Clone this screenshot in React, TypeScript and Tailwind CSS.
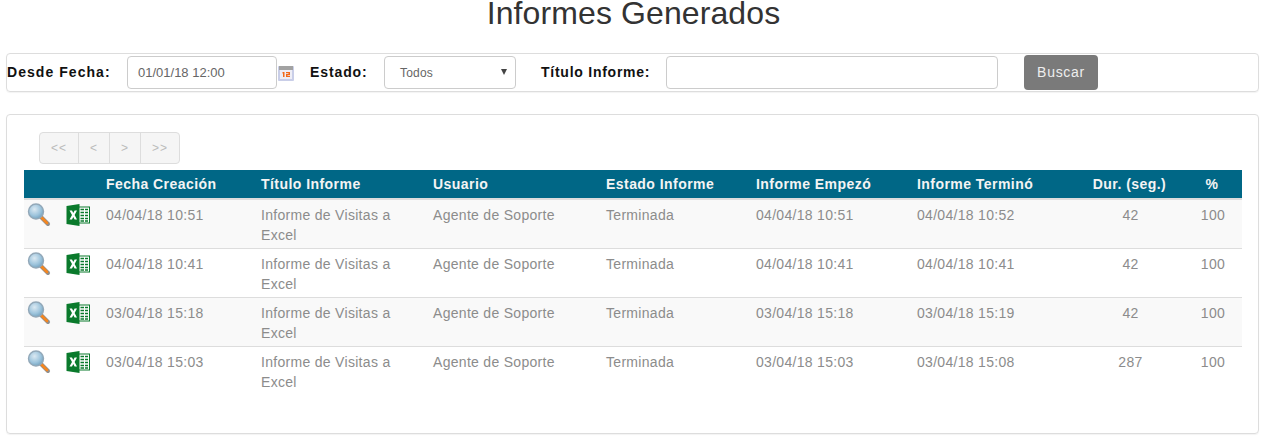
const rows = [
  ["04/04/18 10:51", "04/04/18 10:51", "04/04/18 10:52", "42"],
  ["04/04/18 10:41", "04/04/18 10:41", "04/04/18 10:41", "42"],
  ["03/04/18 15:18", "03/04/18 15:18", "03/04/18 15:19", "42"],
  ["03/04/18 15:03", "03/04/18 15:03", "03/04/18 15:08", "287"],
];

function Magnifier() {
  return (
    <svg width="24" height="24" viewBox="0 0 24 24" className="block">
      <defs>
        <radialGradient id="lens" cx="40%" cy="35%" r="70%">
          <stop offset="0%" stopColor="#dbe9f2" />
          <stop offset="60%" stopColor="#9dc4dc" />
          <stop offset="100%" stopColor="#6f9fbc" />
        </radialGradient>
      </defs>
      <path d="M13.5 13.5 L21 21" stroke="#8f8f8f" strokeWidth="4" strokeLinecap="round" />
      <path d="M14.5 14.5 L20 20" stroke="#f5861f" strokeWidth="2.6" strokeLinecap="round" />
      <circle cx="9" cy="8.5" r="7.5" fill="url(#lens)" stroke="#93a8b8" strokeWidth="1.4" />
    </svg>
  );
}

function ExcelIcon() {
  return (
    <svg width="24" height="22" viewBox="0 0 24 22" className="block">
      <rect x="12" y="2.5" width="12" height="17" fill="#0a7a2c" />
      <rect x="13" y="3.5" width="10" height="15" fill="#fff" />
      <path d="M14.5 5.5h3.5M19 5.5h3M14.5 8.5h3.5M19 8.5h3M14.5 11.5h3.5M19 11.5h3M14.5 14.5h3.5M19 14.5h3M14.5 17h3.5M19 17h3" stroke="#0a7a2c" strokeWidth="1.6" />
      <path d="M0.5 2 L13.5 0 V22 L0.5 20 Z" fill="#0a7a2c" />
      <path d="M3.5 6.5 L6 6.5 L7.3 9 L8.6 6.5 L11 6.5 L8.6 11 L11 15.5 L8.6 15.5 L7.3 13 L6 15.5 L3.5 15.5 L6 11 Z" fill="#fff" />
    </svg>
  );
}

function CalendarIcon() {
  return (
    <svg width="16" height="16" viewBox="0 0 16 16" className="block">
      <rect x="0" y="1" width="16" height="15" rx="1" fill="#c9cee8" />
      <rect x="1" y="1" width="14" height="4" fill="#a2a2a2" />
      <rect x="2" y="5" width="12" height="9" fill="#eeeef6" />
      <path d="M4.5 7h2v5h-1.5v-3.5h-.5zM8 7h4v3h-2.5v.8H12V12H8V9h2.5v-.8H8z" fill="#f26a1b" />
    </svg>
  );
}

const Td = ({ children, className = "" }: { children?: React.ReactNode; className?: string }) => (
  <td className={`px-1 pt-[5px] align-top ${className}`}>{children}</td>
);

export default function App() {
  return (
    <div className="h-[439px] w-[1264px] overflow-hidden bg-white font-['Liberation_Sans',Arial,sans-serif]">
      <h1 className="h-[53px] pl-[3px] text-center text-[32px] leading-[26px] font-normal tracking-[0.1px] text-[#333]">Informes Generados</h1>

      <div className="mx-[6px] flex h-[39px] w-[1253px] items-center rounded-[4px] border border-[#ddd] shadow-[0_1px_1px_rgba(0,0,0,0.05)]">
        <span className="w-[120px] text-[14px] font-bold tracking-[1.05px] text-[#111]">Desde Fecha:</span>
        <div className="flex h-[33px] w-[150px] items-center rounded-[4px] border border-[#ccc] pl-[10px] text-[13px] text-[#666]">01/01/18 12:00</div>
        <span className="ml-[1px] w-[16px]"><CalendarIcon /></span>
        <span className="ml-[16px] w-[74px] text-[14px] font-bold tracking-[0.9px] text-[#111]">Estado:</span>
        <div className="relative flex h-[33px] w-[132px] items-center rounded-[4px] border border-[#ccc] pl-[15px] text-[12px] tracking-[0.2px] text-[#666]">
          Todos
          <span className="absolute top-[12px] right-[8px] h-0 w-0 border-x-[3px] border-t-[6px] border-x-transparent border-t-[#444]" />
        </div>
        <span className="ml-[25px] w-[125px] text-[14px] font-bold tracking-[0.75px] text-[#111]">Título Informe:</span>
        <div className="h-[33px] w-[332px] rounded-[4px] border border-[#ccc]" />
        <button className="ml-[26px] h-[35px] w-[74px] rounded-[4px] bg-[#7a7a7a] text-[14px] tracking-[0.7px] text-[#eee]">Buscar</button>
      </div>

      <div className="mx-[6px] mt-[22px] h-[320px] w-[1253px] rounded-[4px] border border-[#ddd] px-[17px] pt-[17px] shadow-[0_1px_1px_rgba(0,0,0,0.05)]">
        <div className="ml-[15px] flex h-[32px] w-[141px] rounded-[4px] border border-[#ddd] bg-[#f5f5f5] text-[12px] text-[#bbb]">
          {[["<<", "w-[39px]"], ["<", "w-[31px]"], [">", "w-[31px]"], [">>", "flex-1"]].map(([t, w], i) => (
            <span key={i} className={`flex items-center justify-center tracking-[1px] ${w} ${i < 3 ? "border-r border-[#ddd]" : ""}`}>{t}</span>
          ))}
        </div>

        <table className="mt-[6px] w-[1218px] table-fixed border-collapse text-[14px] leading-[20px] tracking-[0.3px] text-[#8c8c8c]">
          <colgroup>
            <col className="w-[38px]" />
            <col className="w-[40px]" />
            <col className="w-[155px]" />
            <col className="w-[172px]" />
            <col className="w-[173px]" />
            <col className="w-[150px]" />
            <col className="w-[161px]" />
            <col className="w-[164px]" />
            <col className="w-[105px]" />
            <col className="w-[60px]" />
          </colgroup>
          <thead>
            <tr className="h-[29px] border-b-2 border-[#ddd] bg-[#006786] text-left font-bold tracking-[0.45px] text-[#f4f4f4]">
              <th className="px-1 pb-[1px]" />
              <th className="px-1 pb-[1px]" />
              <th className="px-1 pb-[1px]">Fecha Creación</th>
              <th className="px-1 pb-[1px]">Título Informe</th>
              <th className="px-1 pb-[1px]">Usuario</th>
              <th className="px-1 pb-[1px]">Estado Informe</th>
              <th className="px-1 pb-[1px]">Informe Empezó</th>
              <th className="px-1 pb-[1px]">Informe Terminó</th>
              <th className="px-1 pb-[1px] text-center">Dur. (seg.)</th>
              <th className="px-1 pb-[1px] text-center">%</th>
            </tr>
          </thead>
          <tbody>
            {rows.map((r, i) => (
              <tr key={i} className={`h-[49px] border-b border-[#ddd] last:border-b-0 ${i % 2 === 0 ? "bg-[#f9f9f9]" : "bg-white"}`}>
                <td className="pt-[3px] pl-[3px] align-top"><Magnifier /></td>
                <td className="pt-[4px] pl-[4px] align-top"><ExcelIcon /></td>
                <Td>{r[0]}</Td>
                <Td>Informe de Visitas a Excel</Td>
                <Td>Agente de Soporte</Td>
                <Td>Terminada</Td>
                <Td>{r[1]}</Td>
                <Td>{r[2]}</Td>
                <Td className="pl-[6px] text-center">{r[3]}</Td>
                <Td className="pl-[6px] text-center">100</Td>
              </tr>
            ))}
          </tbody>
        </table>
      </div>
    </div>
  );
}
